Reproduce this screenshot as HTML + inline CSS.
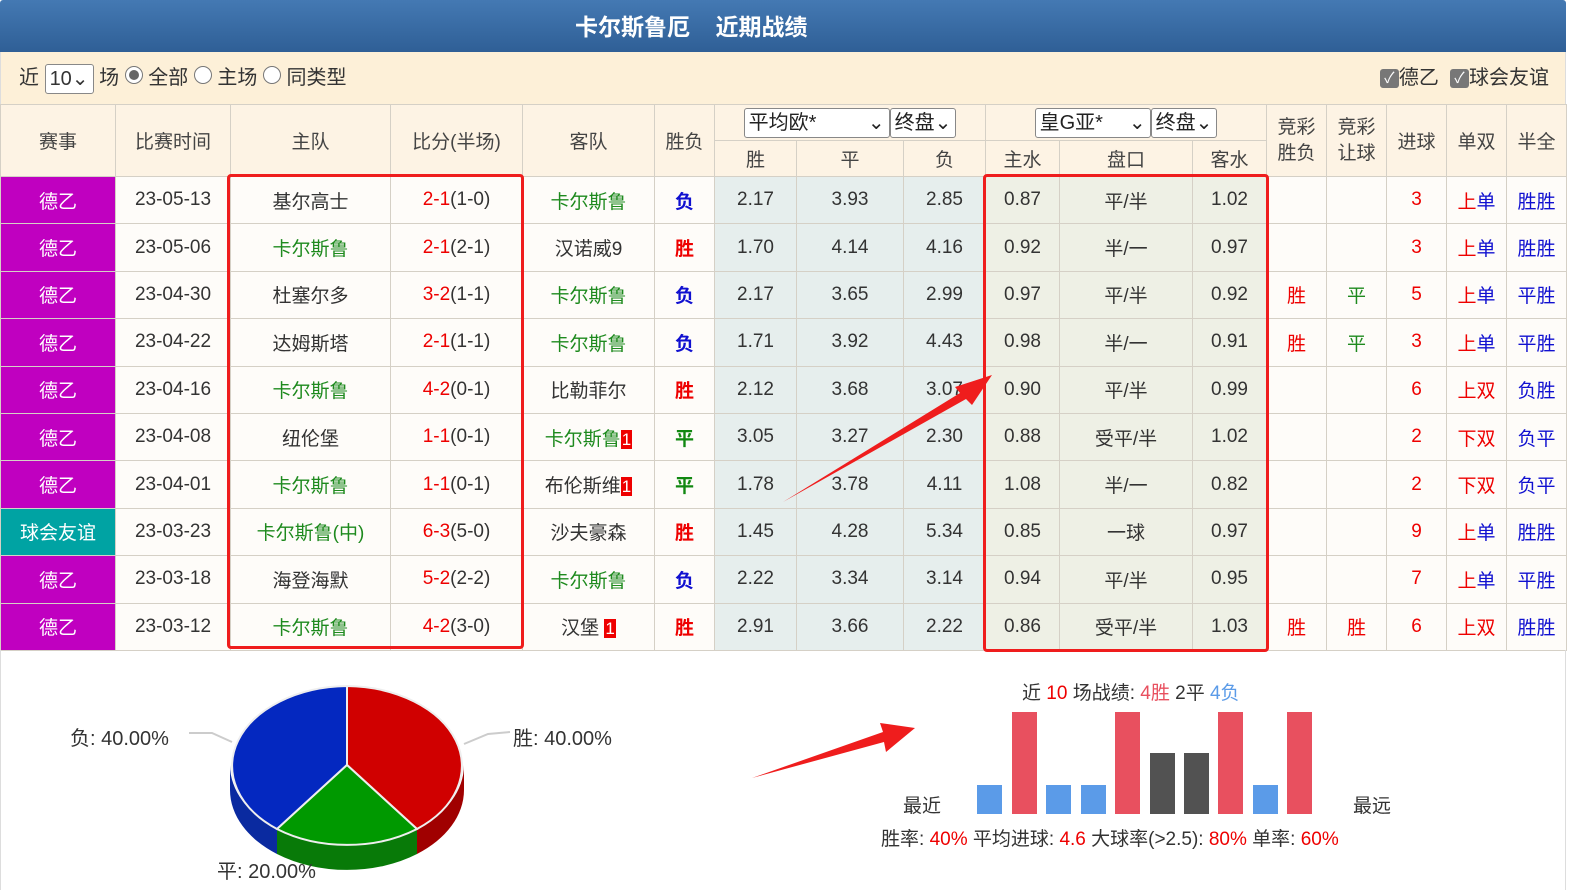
<!DOCTYPE html>
<html><head><meta charset="utf-8"><style>
*{margin:0;padding:0;box-sizing:border-box}
body{width:1594px;height:890px;overflow:hidden;background:#fff;font-family:"Liberation Sans","Noto Sans CJK SC",sans-serif;color:#333;position:relative}
#hd{position:absolute;left:0;top:0;width:1566px;height:52px;background:linear-gradient(#4479b3,#2f5f96);color:#fff;font-weight:bold;font-size:23px;line-height:54px;padding-left:575px;border-radius:3px 3px 0 0}
#flt{position:absolute;left:0;top:52px;width:1566px;height:52px;background:#fdf0d8;font-size:20px;line-height:52px;padding-left:18px;border-left:1px solid #ddd;border-right:1px solid #ddd}
.sel{display:inline-block;border:1px solid #888;border-radius:3px;background:#fff;height:30px;line-height:28px;padding:0 4px;vertical-align:middle;font-size:20px}
.rad{display:inline-block;width:18px;height:18px;border:1px solid #777;border-radius:50%;background:#fff;vertical-align:0px;position:relative}
.rad.on::after{content:"";position:absolute;left:3px;top:3px;width:10px;height:10px;border-radius:50%;background:#666}
.cb{display:inline-block;width:19px;height:19px;background:#777;border-radius:3px;color:#fff;font-size:15px;line-height:19px;text-align:center;vertical-align:1px}
table{position:absolute;left:0;top:104px;border-collapse:collapse;table-layout:fixed;font-size:19px}
td{border:1px solid #d5d0c6;text-align:center;vertical-align:middle;white-space:nowrap;overflow:hidden}
thead td{background:#fdf3e4;color:#444}
tbody tr{height:47.4px}
tbody td{background:#fefcf9}
td.o{background:#e6eeed}
td.a{background:#eef0e5}
.lg{background:#c000c0!important;color:#fff}
.lt{background:#00a3a3!important;color:#fff}
.g{color:#1e8a1e}
.r{color:#e00}
.b{color:#1010d0}
.W{color:#e00;font-weight:bold}
.L{color:#1010d0;font-weight:bold}
.D{color:#118811;font-weight:bold}
.n{background:#e00;color:#fff;font-size:17px;padding:0 1px}
.box{position:absolute;border:3px solid #ef1d1d;border-radius:4px}
.s2{display:inline-block;border:1px solid #888;border-radius:3px;background:#fff;height:30px;line-height:28px;padding:0 4px;font-size:20px;text-align:left;color:#222}
</style></head><body>
<div id="hd">卡尔斯鲁厄&nbsp;&nbsp;&nbsp;&nbsp;近期战绩</div>
<div id="flt">近 <span class="sel">10⌄</span> 场 <span class="rad on"></span> 全部 <span class="rad"></span> 主场 <span class="rad"></span> 同类型
<span style="position:absolute;right:16px;top:0"><span class="cb">✓</span>德乙 &nbsp;<span class="cb">✓</span>球会友谊</span></div>
<table>
<colgroup><col style="width:115px"><col style="width:115px"><col style="width:160px"><col style="width:132px"><col style="width:132px"><col style="width:60px"><col style="width:82px"><col style="width:107px"><col style="width:82px"><col style="width:74px"><col style="width:133px"><col style="width:74px"><col style="width:60px"><col style="width:60px"><col style="width:60px"><col style="width:60px"><col style="width:60px"></colgroup>
<thead>
<tr style="height:36px"><td rowspan="2">赛事</td><td rowspan="2">比赛时间</td><td rowspan="2">主队</td><td rowspan="2">比分(半场)</td><td rowspan="2">客队</td><td rowspan="2">胜负</td>
<td colspan="3"><span class="s2" style="width:146px">平均欧*<span style="float:right">⌄</span></span><span class="s2">终盘⌄</span></td>
<td colspan="3"><span class="s2" style="width:116px">皇G亚*<span style="float:right">⌄</span></span><span class="s2">终盘⌄</span></td>
<td rowspan="2" style="line-height:26px">竞彩<br>胜负</td><td rowspan="2" style="line-height:26px">竞彩<br>让球</td><td rowspan="2">进球</td><td rowspan="2">单双</td><td rowspan="2">半全</td></tr>
<tr style="height:36px"><td>胜</td><td>平</td><td>负</td><td>主水</td><td>盘口</td><td>客水</td></tr>
</thead>
<tbody>
<tr><td class="lg">德乙</td><td>23-05-13</td><td>基尔高士</td><td><span class="r">2-1</span>(1-0)</td><td class="g">卡尔斯鲁</td><td class="L">负</td><td class="o">2.17</td><td class="o">3.93</td><td class="o">2.85</td><td class="a">0.87</td><td class="a">平/半</td><td class="a">1.02</td><td></td><td></td><td class="r">3</td><td><span class="r">上</span><span class="b">单</span></td><td class="b">胜胜</td></tr>
<tr><td class="lg">德乙</td><td>23-05-06</td><td class="g">卡尔斯鲁</td><td><span class="r">2-1</span>(2-1)</td><td>汉诺威9</td><td class="W">胜</td><td class="o">1.70</td><td class="o">4.14</td><td class="o">4.16</td><td class="a">0.92</td><td class="a">半/一</td><td class="a">0.97</td><td></td><td></td><td class="r">3</td><td><span class="r">上</span><span class="b">单</span></td><td class="b">胜胜</td></tr>
<tr><td class="lg">德乙</td><td>23-04-30</td><td>杜塞尔多</td><td><span class="r">3-2</span>(1-1)</td><td class="g">卡尔斯鲁</td><td class="L">负</td><td class="o">2.17</td><td class="o">3.65</td><td class="o">2.99</td><td class="a">0.97</td><td class="a">平/半</td><td class="a">0.92</td><td class="r">胜</td><td class="g">平</td><td class="r">5</td><td><span class="r">上</span><span class="b">单</span></td><td class="b">平胜</td></tr>
<tr><td class="lg">德乙</td><td>23-04-22</td><td>达姆斯塔</td><td><span class="r">2-1</span>(1-1)</td><td class="g">卡尔斯鲁</td><td class="L">负</td><td class="o">1.71</td><td class="o">3.92</td><td class="o">4.43</td><td class="a">0.98</td><td class="a">半/一</td><td class="a">0.91</td><td class="r">胜</td><td class="g">平</td><td class="r">3</td><td><span class="r">上</span><span class="b">单</span></td><td class="b">平胜</td></tr>
<tr><td class="lg">德乙</td><td>23-04-16</td><td class="g">卡尔斯鲁</td><td><span class="r">4-2</span>(0-1)</td><td>比勒菲尔</td><td class="W">胜</td><td class="o">2.12</td><td class="o">3.68</td><td class="o">3.07</td><td class="a">0.90</td><td class="a">平/半</td><td class="a">0.99</td><td></td><td></td><td class="r">6</td><td><span class="r">上双</span></td><td class="b">负胜</td></tr>
<tr><td class="lg">德乙</td><td>23-04-08</td><td>纽伦堡</td><td><span class="r">1-1</span>(0-1)</td><td class="g">卡尔斯鲁<span class="n">1</span></td><td class="D">平</td><td class="o">3.05</td><td class="o">3.27</td><td class="o">2.30</td><td class="a">0.88</td><td class="a">受平/半</td><td class="a">1.02</td><td></td><td></td><td class="r">2</td><td><span class="r">下双</span></td><td class="b">负平</td></tr>
<tr><td class="lg">德乙</td><td>23-04-01</td><td class="g">卡尔斯鲁</td><td><span class="r">1-1</span>(0-1)</td><td>布伦斯维<span class="n">1</span></td><td class="D">平</td><td class="o">1.78</td><td class="o">3.78</td><td class="o">4.11</td><td class="a">1.08</td><td class="a">半/一</td><td class="a">0.82</td><td></td><td></td><td class="r">2</td><td><span class="r">下双</span></td><td class="b">负平</td></tr>
<tr><td class="lt">球会友谊</td><td>23-03-23</td><td class="g">卡尔斯鲁(中)</td><td><span class="r">6-3</span>(5-0)</td><td>沙夫豪森</td><td class="W">胜</td><td class="o">1.45</td><td class="o">4.28</td><td class="o">5.34</td><td class="a">0.85</td><td class="a">一球</td><td class="a">0.97</td><td></td><td></td><td class="r">9</td><td><span class="r">上</span><span class="b">单</span></td><td class="b">胜胜</td></tr>
<tr><td class="lg">德乙</td><td>23-03-18</td><td>海登海默</td><td><span class="r">5-2</span>(2-2)</td><td class="g">卡尔斯鲁</td><td class="L">负</td><td class="o">2.22</td><td class="o">3.34</td><td class="o">3.14</td><td class="a">0.94</td><td class="a">平/半</td><td class="a">0.95</td><td></td><td></td><td class="r">7</td><td><span class="r">上</span><span class="b">单</span></td><td class="b">平胜</td></tr>
<tr><td class="lg">德乙</td><td>23-03-12</td><td class="g">卡尔斯鲁</td><td><span class="r">4-2</span>(3-0)</td><td>汉堡 <span class="n">1</span></td><td class="W">胜</td><td class="o">2.91</td><td class="o">3.66</td><td class="o">2.22</td><td class="a">0.86</td><td class="a">受平/半</td><td class="a">1.03</td><td class="r">胜</td><td class="r">胜</td><td class="r">6</td><td><span class="r">上双</span></td><td class="b">胜胜</td></tr>
</tbody></table>
<div class="box" style="left:227px;top:174px;width:297px;height:475px"></div>
<div class="box" style="left:983px;top:174px;width:286px;height:478px"></div>
<div style="position:absolute;left:0;top:650px;width:1px;height:240px;background:#ddd"></div>
<div style="position:absolute;left:1565px;top:650px;width:1px;height:240px;background:#ddd"></div>
<svg style="position:absolute;left:0;top:0" width="1594" height="890">
<path d="M230 765 L230 790 A117 80 0 0 0 277 854 L277 829 A117 80 0 0 1 230 765 Z" fill="#0a2aa0"/>
<path d="M277 829 L277 854 A117 80 0 0 0 417 854 L417 829 A117 80 0 0 1 277 829 Z" fill="#087a08"/>
<path d="M417 829 L417 854 A117 80 0 0 0 464 790 L464 765 A117 80 0 0 1 417 829 Z" fill="#a00000"/>
<path d="M347 765 L347 686 A117 80 0 0 1 417 829 Z" fill="#d00000" stroke="#eee" stroke-width="2"/>
<path d="M347 765 L347 686 A117 80 0 0 0 277 829 Z" fill="#0428c0" stroke="#eee" stroke-width="2"/>
<path d="M347 765 L417 829 A117 80 0 0 1 277 829 Z" fill="#009900" stroke="#eee" stroke-width="2"/>
<polyline points="189,733 212,733 232,742" fill="none" stroke="#ccc" stroke-width="2"/>
<polyline points="510,732 488,734 464,744" fill="none" stroke="#ccc" stroke-width="2"/>
<text x="70" y="745" font-size="20" fill="#333" font-family="Liberation Sans,Noto Sans CJK SC,sans-serif">负: 40.00%</text>
<text x="513" y="745" font-size="20" fill="#333" font-family="Liberation Sans,Noto Sans CJK SC,sans-serif">胜: 40.00%</text>
<text x="217" y="878" font-size="20" fill="#333" font-family="Liberation Sans,Noto Sans CJK SC,sans-serif">平: 20.00%</text>
<polygon points="783,502 960,393 955,387 992,375 972,405 966,399" fill="#ef1d1d"/>
<polygon points="752,778 883,732 880,723 915,728 886,752 884,742" fill="#ef1d1d"/>
<rect x="977" y="785" width="25" height="29" fill="#5b9be8"/>
<rect x="1012" y="712" width="25" height="102" fill="#e8505f"/>
<rect x="1046" y="785" width="25" height="29" fill="#5b9be8"/>
<rect x="1081" y="785" width="25" height="29" fill="#5b9be8"/>
<rect x="1115" y="712" width="25" height="102" fill="#e8505f"/>
<rect x="1150" y="753" width="25" height="61" fill="#525252"/>
<rect x="1184" y="753" width="25" height="61" fill="#525252"/>
<rect x="1218" y="712" width="25" height="102" fill="#e8505f"/>
<rect x="1253" y="785" width="25" height="29" fill="#5b9be8"/>
<rect x="1287" y="712" width="25" height="102" fill="#e8505f"/>
</svg>
<div style="position:absolute;left:1022px;top:678px;font-size:19px;color:#333">近 <span style="color:#e00">10</span> 场战绩: <span style="color:#e8505f">4胜</span> 2平 <span style="color:#5b9be8">4负</span></div>
<div style="position:absolute;left:903px;top:791px;font-size:19px;color:#333">最近</div>
<div style="position:absolute;left:1353px;top:791px;font-size:19px;color:#333">最远</div>
<div style="position:absolute;left:881px;top:824px;font-size:19px;color:#333">胜率: <span class="r">40%</span> 平均进球: <span class="r">4.6</span> 大球率(&gt;2.5): <span class="r">80%</span> 单率: <span class="r">60%</span></div>
</body></html>
